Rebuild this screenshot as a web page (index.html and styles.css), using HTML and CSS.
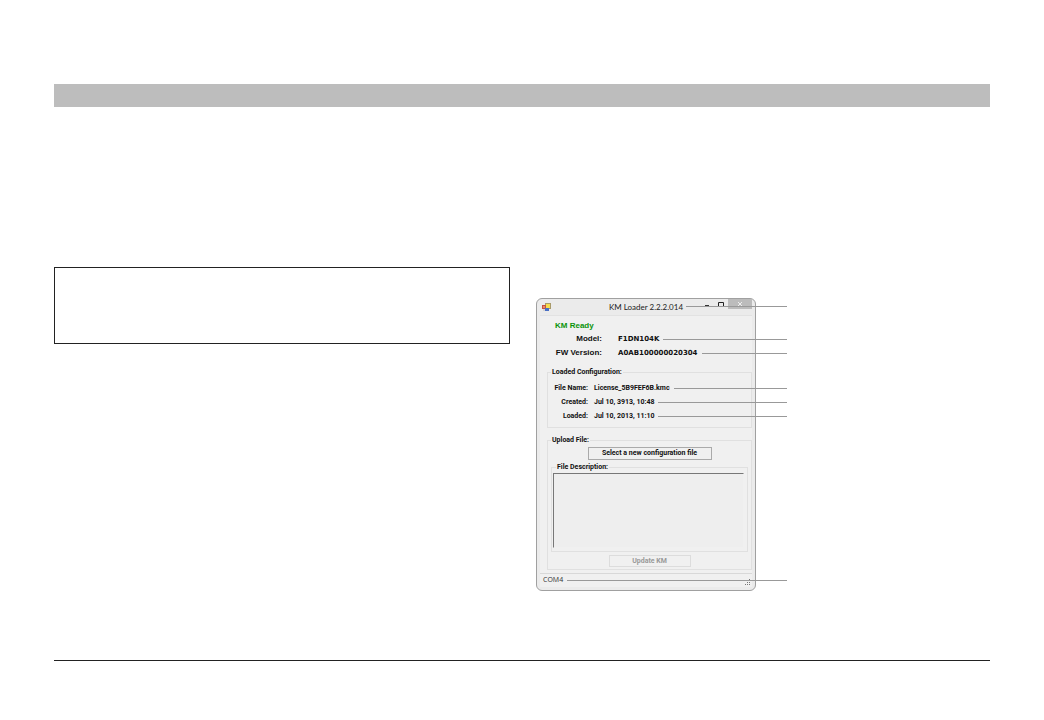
FILE: index.html
```html
<!DOCTYPE html>
<html lang="en">
<head>
  <meta charset="UTF-8">
  <meta name="viewport" content="width=device-width, initial-scale=1.0">
  <title>KM Loader</title>
  <link rel="stylesheet" href="styles.css">
</head>
<body>
  <header class="band"></header>

  <main class="columns">
    <section class="note"></section>

    <section class="window">
      <div class="titlebar">
        <svg class="app-icon" viewBox="0 0 10 9" width="10" height="9" aria-hidden="true">
          <rect x="3" y="0" width="6" height="6" fill="#a89a6a"/>
          <rect x="4" y="1" width="4" height="4" fill="#f5dc4e"/>
          <rect x="0" y="2" width="4" height="4" fill="#c8523c"/>
          <rect x="1" y="3" width="2" height="2" fill="#e58a72"/>
          <rect x="3" y="5" width="4" height="3" fill="#4a6fc4"/>
          <rect x="1" y="6" width="2" height="2" fill="#d5d5d5"/>
        </svg>
        <h1 class="title">KM Loader 2.2.2.014</h1>
        <div class="controls">
          <button class="control" aria-label="Minimize">
            <svg viewBox="0 0 6 7" width="6" height="7"><path d="M1 4.5h4" stroke="#333" fill="none"/></svg>
          </button>
          <button class="control" aria-label="Maximize">
            <svg viewBox="0 0 6 7" width="6" height="7"><path d="M.5 6V1.5h5V6" stroke="#222" fill="none"/></svg>
          </button>
          <button class="control close" aria-label="Close">
            <svg viewBox="0 0 6 6" width="6" height="6"><path d="M1 1l4 4M5 1l-4 4" stroke="#eee" fill="none"/></svg>
          </button>
          <span class="title-line"></span>
        </div>
      </div>

      <div class="panel">
        <h2 class="ready">KM Ready</h2>
        <dl class="info">
          <div class="row"><dt>Model:</dt><dd>F1DN104K</dd></div>
          <div class="row"><dt>FW Version:</dt><dd>A0AB100000020304</dd></div>
        </dl>

        <fieldset class="group">
          <legend>Loaded Configuration:</legend>
          <dl class="config">
            <div class="row"><dt>File Name:</dt><dd>License_5B9FEF6B.kmc</dd></div>
            <div class="row"><dt>Created:</dt><dd>Jul 10, 3913, 10:48</dd></div>
            <div class="row"><dt>Loaded:</dt><dd>Jul 10, 2013, 11:10</dd></div>
          </dl>
        </fieldset>

        <fieldset class="group upload">
          <legend>Upload File:</legend>
          <button class="select-file">Select a new configuration file</button>
          <fieldset class="group description">
            <legend><label for="fileDescription">File Description:</label></legend>
            <textarea id="fileDescription" readonly></textarea>
          </fieldset>
          <button class="update" disabled>Update KM</button>
        </fieldset>
      </div>

      <div class="statusbar">
        <span class="port">COM4</span>
        <svg viewBox="0 0 8 7" width="8" height="7" aria-hidden="true">
          <path d="M5 0h1v1h-1zM3 3h1v1h-1zM5 3h1v1h-1zM1 5h1v1h-1zM3 5h1v1h-1zM5 5h1v1h-1z" fill="#777"/>
        </svg>
      </div>
    </section>
  </main>

  <footer class="footer"></footer>
</body>
</html>
```
FILE: styles.css
```css
* {
  box-sizing: border-box;
}

body {
  display: flex;
  flex-direction: column;
  min-height: 100vh;
  margin: 0;
  padding: 84px 54px 59px;
  background-color: white;
  color: #111;
  font-family: "Liberation Sans", Arial, sans-serif;
}

h1, h2, dl, dd, fieldset, legend {
  margin: 0;
  padding: 0;
}

button {
  padding: 0;
  border: none;
  background: none;
  font-family: inherit;
}

.band {
  height: 23px;
  background-color: #bdbdbd;
}

.columns {
  display: grid;
  grid-template-columns: 1fr 1fr;
  align-items: start;
  gap: 24px;
  margin-top: 160px;
}

.note {
  min-height: 77px;
  border: 1px solid #222;
}

.footer {
  margin-top: auto;
  border-top: 1px solid #222;
}

/* Application window */
.window {
  width: 220px;
  margin-top: 31px;
  margin-left: 2px;
  padding: 0 3px 3px;
  border: 1px solid #a0a0a0;
  border-radius: 6px;
  background-color: #ebebeb;
}

.titlebar {
  display: grid;
  grid-template-columns: 1fr auto 1fr;
  align-items: start;
  height: 16px;
}

.app-icon {
  margin: 4px 2px;
}

.title {
  font-family: Lato, sans-serif;
  font-size: 8px;
  font-weight: 400;
  line-height: 16px;
  color: #222;
}

.controls {
  position: relative;
  display: flex;
  justify-content: flex-end;
  gap: 8px;
}

.control {
  display: flex;
  align-items: center;
  justify-content: center;
  height: 10px;
}

.close {
  width: 24px;
  margin-left: -4px;
  background-color: #bcbcbc;
}

/* Callout lines run out over the window's right edge */
.title-line {
  position: absolute;
  top: 7px;
  left: 3px;
  right: -35px;
  height: 1px;
  background-color: #999;
}

.row::after,
.port::after {
  content: "";
  flex: 1;
  height: 1px;
  margin-left: 4px;
  background-color: #999;
}

.panel {
  padding: 3px 0 3px 7px;
  border-top: 1px solid #e2e2e2;
  background-color: #f0f0f0;
}

.ready {
  margin-left: 8px;
  font-size: 8px;
  line-height: 13px;
  color: #0a930a;
}

.row {
  display: flex;
  align-items: center;
  font-weight: 700;
  line-height: 14px;
}

.row dt {
  text-align: right;
}

.info {
  margin-right: -35px;
  font-size: 8px;
}

.info dt {
  width: 55px;
  margin-right: 16px;
}

.info dd {
  font-family: "DejaVu Sans", sans-serif;
  font-size: 7px;
}

.group {
  min-width: 0;
  margin-top: 7px;
  border: 1px solid #e0e0e0;
  font-family: Roboto, sans-serif;
  font-size: 7px;
}

.group legend {
  margin-left: 3px;
  padding: 0 1px;
  font-weight: 700;
  line-height: 10px;
}

.config {
  margin-right: -36px;
  padding: 4px 0;
}

.config dt {
  width: 40px;
  margin-right: 6px;
}

.upload {
  display: flex;
  flex-direction: column;
  padding: 2px 3px;
}

.upload > legend {
  margin-left: 3px;
}

.select-file {
  align-self: center;
  width: 124px;
  border: 1px solid #aaa;
  background-color: #f0f0f0;
  color: #111;
  font-size: 7px;
  font-weight: 700;
  line-height: 11px;
}

.description {
  margin-top: 2px;
  padding: 1px 3px 3px 1px;
}

.description textarea {
  display: block;
  width: 100%;
  height: 75px;
  border: 1px solid #f0f0f0;
  border-top-color: #777;
  border-left-color: #777;
  background-color: #eee;
  font-size: 7px;
  resize: none;
}

.upload > legend {
  margin-left: 0;
}

.update {
  align-self: center;
  width: 82px;
  margin-top: 3px;
  border: 1px solid #dcdcdc;
  color: #999;
  font-size: 7px;
  font-weight: 700;
  line-height: 10px;
}

.statusbar {
  display: flex;
  align-items: flex-end;
  padding: 0 0 1px 3px;
  border-top: 1px solid #d8d8d8;
  background-color: #f0f0f0;
  color: #333;
  font-family: "Open Sans", sans-serif;
  font-size: 7px;
  line-height: 12px;
}

.port {
  display: flex;
  flex: 1;
  align-items: center;
  margin-right: -43px;
}
```
